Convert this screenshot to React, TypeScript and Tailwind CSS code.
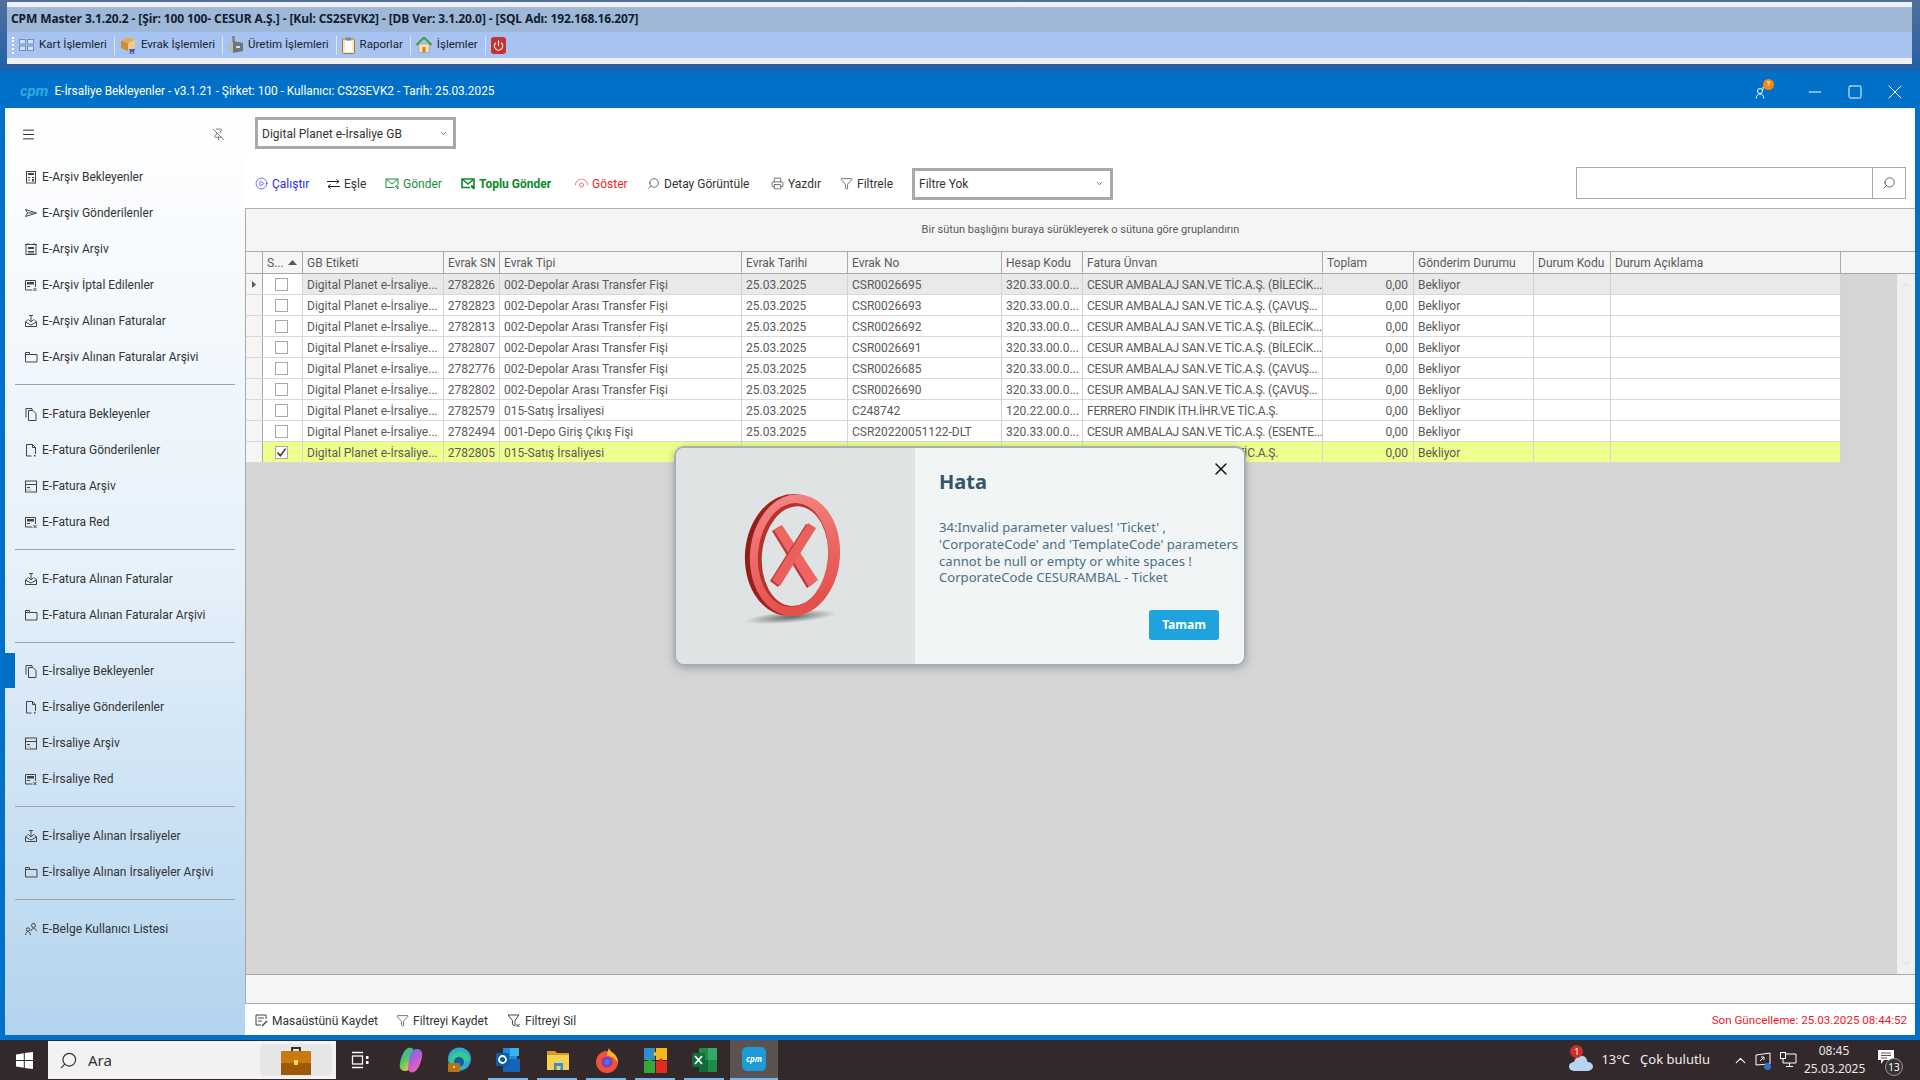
import React from 'react';
import {
    ChevronDown,
    ChevronUp,
    Filter,
    Menu,
    Minus,
    PinOff,
    PlayCircle,
    Power,
    Printer,
    Search,
    Square,
    X,
} from 'lucide-react';

type IconKind = 'calc' | 'send' | 'news' | 'red' | 'inbox' | 'folder' | 'copy' | 'file' | 'archive' | 'users';

// thin 14px glyphs used by the side menu
const SideIcon = ({ kind }: { kind: IconKind }) => (
    <svg width="14" height="14" viewBox="0 0 14 14" fill="none" stroke="#444" strokeWidth="1" className="shrink-0">
        {kind === 'calc' && (
            <>
                <rect x="2.5" y="1.5" width="9" height="11.5" />
                <rect x="4" y="3" width="6" height="2" fill="#444" stroke="none" />
                <path d="M4 7.5h2M8 7.5h2M4 10h2" />
                <rect x="8" y="9" width="2" height="2.5" fill="#444" stroke="none" />
            </>
        )}
        {kind === 'send' && <path d="M1.5 3.5 L12.5 7 L1.5 10.5 L3.5 7 Z M3.5 7 H9" />}
        {kind === 'news' && (
            <>
                <rect x="2" y="2.5" width="10" height="10" />
                <path d="M1 2.5h12M4 1v2M10 1v2" />
                <rect x="4" y="5" width="6" height="2" fill="#444" stroke="none" />
                <path d="M4 9.5h6M4 11h6" />
            </>
        )}
        {kind === 'red' && (
            <>
                <path d="M11.5 9V2.5H1.5v9.5h7" />
                <rect x="3" y="4" width="7" height="2.5" fill="#444" stroke="none" />
                <path d="M3 8.5h3M9.5 10l3 3M12.5 10l-3 3" />
            </>
        )}
        {kind === 'inbox' && (
            <>
                <path d="M1.5 8 L4 5.5M12.5 8 L10 5.5M1.5 8v4.5h11V8M1.5 8 L7 11 L12.5 8" />
                <path d="M7 1.5V8M4.5 5.5 L7 8 L9.5 5.5M5 1.5h4" />
            </>
        )}
        {kind === 'folder' && <path d="M1.5 2.5h4v2h7.5v7.5H1.5z M1.5 4.5h4" />}
        {kind === 'copy' && (
            <>
                <path d="M2 10.5V1.5h6v1.5" />
                <path d="M4.5 3.5h4.5l3 3v7h-7.5z" />
            </>
        )}
        {kind === 'file' && (
            <>
                <path d="M2.5 13V1.5h6l3 3V11" />
                <path d="M8.5 1.5v3h3M2.5 13h5" />
                <rect x="10" y="12" width="1.5" height="1.5" fill="#444" stroke="none" />
            </>
        )}
        {kind === 'archive' && (
            <>
                <rect x="1.5" y="2" width="11" height="11" />
                <path d="M1.5 5.5h11M3 8.5h3M1.5 11h5" />
                <rect x="2" y="9.5" width="4" height="3" fill="#cfcfcf" stroke="none" />
            </>
        )}
        {kind === 'users' && (
            <>
                <circle cx="9.5" cy="3.5" r="2" />
                <path d="M7 9c.5-2 1.5-2.5 2.5-2.5S12 7 12.5 9" />
                <circle cx="4" cy="7.5" r="1.7" />
                <path d="M1.5 13c.5-2.5 1.5-3.5 2.5-3.5S6 10.500 6.5 13" />
            </>
        )}
    </svg>
);

const sideGroups: { label: string; icon: IconKind; active?: boolean }[][] = [
    [
        { label: 'E-Arşiv Bekleyenler', icon: 'calc' },
        { label: 'E-Arşiv Gönderilenler', icon: 'send' },
        { label: 'E-Arşiv Arşiv', icon: 'news' },
        { label: 'E-Arşiv İptal Edilenler', icon: 'red' },
        { label: 'E-Arşiv Alınan Faturalar', icon: 'inbox' },
        { label: 'E-Arşiv Alınan Faturalar Arşivi', icon: 'folder' },
    ],
    [
        { label: 'E-Fatura Bekleyenler', icon: 'copy' },
        { label: 'E-Fatura Gönderilenler', icon: 'file' },
        { label: 'E-Fatura Arşiv', icon: 'archive' },
        { label: 'E-Fatura Red', icon: 'red' },
    ],
    [
        { label: 'E-Fatura Alınan Faturalar', icon: 'inbox' },
        { label: 'E-Fatura Alınan Faturalar Arşivi', icon: 'folder' },
    ],
    [
        { label: 'E-İrsaliye Bekleyenler', icon: 'copy', active: true },
        { label: 'E-İrsaliye Gönderilenler', icon: 'file' },
        { label: 'E-İrsaliye Arşiv', icon: 'archive' },
        { label: 'E-İrsaliye Red', icon: 'red' },
    ],
    [
        { label: 'E-İrsaliye Alınan İrsaliyeler', icon: 'inbox' },
        { label: 'E-İrsaliye Alınan İrsaliyeler Arşivi', icon: 'folder' },
    ],
    [{ label: 'E-Belge Kullanıcı Listesi', icon: 'users' }],
];

const columns = [
    { label: 'GB Etiketi', width: 'w-[141px]' },
    { label: 'Evrak SN', width: 'w-[56px]' },
    { label: 'Evrak Tipi', width: 'w-[242px]' },
    { label: 'Evrak Tarihi', width: 'w-[106px]' },
    { label: 'Evrak No', width: 'w-[154px]' },
    { label: 'Hesap Kodu', width: 'w-[81px]' },
    { label: 'Fatura Ünvan', width: 'w-[240px]' },
    { label: 'Toplam', width: 'w-[91px]' },
    { label: 'Gönderim Durumu', width: 'w-[120px]' },
    { label: 'Durum Kodu', width: 'w-[77px]' },
    { label: 'Durum Açıklama', width: 'w-[230px]' },
];

const gb = 'Digital Planet e-İrsaliye...';
const depo = '002-Depolar Arası Transfer Fişi';
const bil = 'CESUR AMBALAJ SAN.VE TİC.A.Ş. (BİLECİK...';
const cav = 'CESUR AMBALAJ SAN.VE TİC.A.Ş. (ÇAVUŞ...';
const fer = 'FERRERO FINDIK İTH.İHR.VE TİC.A.Ş.';

const rows = [
    ['2782826', depo, 'CSR0026695', '320.33.00.0...', bil],
    ['2782823', depo, 'CSR0026693', '320.33.00.0...', cav],
    ['2782813', depo, 'CSR0026692', '320.33.00.0...', bil],
    ['2782807', depo, 'CSR0026691', '320.33.00.0...', bil],
    ['2782776', depo, 'CSR0026685', '320.33.00.0...', cav],
    ['2782802', depo, 'CSR0026690', '320.33.00.0...', cav],
    ['2782579', '015-Satış İrsaliyesi', 'C248742', '120.22.00.0...', fer],
    ['2782494', '001-Depo Giriş Çıkış Fişi', 'CSR20220051122-DLT', '320.33.00.0...', 'CESUR AMBALAJ SAN.VE TİC.A.Ş. (ESENTE...'],
    ['2782805', '015-Satış İrsaliyesi', '', '', fer],
];

const TopMenu = () => {
    const items = [
        {
            label: 'Kart İşlemleri',
            icon: (
                <svg width="15" height="12" viewBox="0 0 15 12" fill="#cfe0f7" stroke="#6b8fc4">
                    <rect x="0.5" y="0.5" width="6" height="4.5" />
                    <rect x="8.5" y="0.5" width="6" height="4.5" />
                    <rect x="0.5" y="7" width="6" height="4.5" />
                    <rect x="8.5" y="7" width="6" height="4.5" />
                </svg>
            ),
        },
        {
            label: 'Evrak İşlemleri',
            icon: (
                <svg width="16" height="18" viewBox="0 0 16 18">
                    <path d="M1 5 L8 1 L15 4 V12 L8 15 L1 12 Z" fill="#e3ad58" />
                    <path d="M8 7 L15 4 V12 L8 15 Z" fill="#f1cc88" />
                    <path d="M1 5 L8 7 V15 L1 12 Z" fill="#c98f3c" />
                    <path d="M9 13h6l-1 3h-4z" fill="#3f63b8" />
                    <circle cx="10.5" cy="17" r="1" fill="#3f63b8" />
                    <circle cx="13.5" cy="17" r="1" fill="#3f63b8" />
                </svg>
            ),
        },
        {
            label: 'Üretim İşlemleri',
            icon: (
                <svg width="15" height="18" viewBox="0 0 15 18">
                    <rect x="4" y="0" width="3" height="6" fill="#8a8a8a" />
                    <path d="M5 5 L15 7 V15 L5 17 Z" fill="#6f7478" />
                    <path d="M0 8 L5 6 V17 L0 15 Z" fill="#b9bdc0" />
                    <rect x="8" y="10" width="4" height="2" fill="#d8dadc" />
                </svg>
            ),
        },
        {
            label: 'Raporlar',
            icon: (
                <svg width="13" height="17" viewBox="0 0 13 17">
                    <rect x="0.5" y="2" width="12" height="14.5" rx="1" fill="#f5e8c4" stroke="#a5762a" />
                    <rect x="3" y="4" width="7" height="11" fill="#fff" />
                    <rect x="4" y="0.5" width="5" height="3" fill="#7d8794" />
                </svg>
            ),
        },
        {
            label: 'İşlemler',
            icon: (
                <svg width="16" height="16" viewBox="0 0 16 16">
                    <rect x="3" y="7" width="10" height="8.5" fill="#f6e4b8" stroke="#a9874a" strokeWidth="0.5" />
                    <path d="M0.5 8 L8 0.5 L15.5 8" fill="none" stroke="#3f9a3a" strokeWidth="2" />
                    <rect x="6.5" y="10" width="3" height="5.5" fill="#c5842c" />
                </svg>
            ),
        },
    ];
    return (
        <div className="h-[26px] bg-[#a6c3f1] flex items-center pl-[5px] text-[11.5px] text-[#1b2430]">
            <div className="w-[2px] h-[17px] border-l-2 border-dotted border-white mr-[5px]" />
            {items.map((item) => (
                <div key={item.label} className="flex items-center">
                    {item.icon}
                    <span className="ml-[5px] mr-[7px] whitespace-nowrap">{item.label}</span>
                    <div className="w-px h-[19px] bg-[#dbe6f8] mr-[5px]" />
                </div>
            ))}
            <div className="w-[15px] h-[17px] rounded-[3px] bg-[#c9322b] flex items-center justify-center">
                <Power size={11} strokeWidth={2.5} className="text-white" />
            </div>
        </div>
    );
};

const Sidebar = () => (
    <aside className="w-[240px] shrink-0 bg-gradient-to-b from-white via-[#e6f1fa] to-[#b3d3ee] text-[#333] text-[12px]">
        <div className="h-[51px] flex items-center justify-between pl-[16px] pr-[20px] pt-[2px]">
            <Menu size={15} strokeWidth={1.5} className="text-[#222]" />
            <PinOff size={13} strokeWidth={1.25} className="text-[#444]" />
        </div>
        {sideGroups.map((group, i) => (
            <div key={i}>
                {group.map((item) => (
                    <div key={item.label} className="h-9 flex items-center relative pl-[19px]">
                        {item.active && <div className="absolute left-0 top-0 w-[10px] h-[35px] bg-[#0170c9]" />}
                        <SideIcon kind={item.icon} />
                        <span className="ml-[4px] whitespace-nowrap">{item.label}</span>
                    </div>
                ))}
                {i < sideGroups.length - 1 && (
                    <div className={i === 2 ? 'h-5 pt-[9px] pl-[10px] pr-[10px]' : 'h-[21px] pt-[9px] pl-[10px] pr-[10px]'}>
                        <div className="h-px bg-[#a3a3a3]" />
                    </div>
                )}
            </div>
        ))}
    </aside>
);

const ToolItem = ({ icon, label, className }: { icon: React.ReactNode; label: string; className?: string }) => (
    <div className={`flex items-center gap-[4px] whitespace-nowrap ${className ?? ''}`}>
        {icon}
        <span>{label}</span>
    </div>
);

const MailIcon = ({ bold }: { bold?: boolean }) => (
    <svg width="14" height="12" viewBox="0 0 14 12" fill="none" stroke="currentColor" strokeWidth={bold ? 1.6 : 1}>
        <path d="M9 9.5H1V1h12v6" />
        <path d="M1 1 L7 6 L13 1" />
        <path d="M10 8h3v3M13 11 L10.5 8.5" />
    </svg>
);

const FunnelX = () => (
    <svg width="14" height="14" viewBox="0 0 14 14" fill="none" stroke="#444">
        <path d="M1 1h11 L8 6.5V12 L5.5 10.5V6.5z" />
        <path d="M9.5 10l3 3M12.5 10l-3 3" />
    </svg>
);

const Toolbar = () => (
    <div className="h-[48px] pt-[7px] pl-[10px] pr-[9px] flex items-start">
        <div className="h-8 flex items-center text-[12px] text-[#333] pt-px">
            <ToolItem className="w-[72px] text-[#2b2bf0]" label="Çalıştır" icon={<PlayCircle size={13} strokeWidth={1.25} />} />
            <ToolItem
                className="w-[58px]"
                label="Eşle"
                icon={
                    <svg width="13" height="10" viewBox="0 0 13 10" fill="none" stroke="#222">
                        <path d="M0 2.5h12M9.5 0.5 L12 2.5 L9.5 4.5M13 7.5H1M3.5 5.5 L1 7.5 L3.5 9.5" />
                    </svg>
                }
            />
            <ToolItem className="w-[76px] text-[#1b8f35]" label="Gönder" icon={<MailIcon />} />
            <ToolItem className="w-[114px] text-[#0c8a2a] font-bold" label="Toplu Gönder" icon={<MailIcon bold />} />
            <ToolItem
                className="w-[72px] text-[#f01f2a]"
                label="Göster"
                icon={
                    <svg width="13" height="9" viewBox="0 0 13 9" fill="none" stroke="#ef6b6b">
                        <path d="M0.5 6 A6 6 0 0 1 12.5 6" />
                        <circle cx="6.5" cy="6" r="2" />
                    </svg>
                }
            />
            <ToolItem className="w-[124px]" label="Detay Görüntüle" icon={<Search size={13} strokeWidth={1.25} className="-scale-x-100" />} />
            <ToolItem className="w-[69px]" label="Yazdır" icon={<Printer size={13} strokeWidth={1.25} />} />
            <ToolItem className="w-[72px]" label="Filtrele" icon={<Filter size={13} strokeWidth={1.25} />} />
            <div className="w-[201px] h-8 border-[3px] border-[#a9a9a9] flex items-center justify-between pl-[4px] pr-[6px]">
                <span>Filtre Yok</span>
                <ChevronDown size={9} strokeWidth={1.75} />
            </div>
        </div>
        <div className="ml-auto w-[330px] h-8 border border-[#a9a9a9] flex justify-end">
            <div className="w-[33px] border-l border-[#a9a9a9] flex items-center justify-center">
                <Search size={14} strokeWidth={1.25} className="-scale-x-100 text-[#333]" />
            </div>
        </div>
    </div>
);

const Checkbox = ({ checked }: { checked?: boolean }) => (
    <div className="w-[13px] h-[13px] bg-white border border-[#a8a8a8] flex items-center justify-center">
        {checked && (
            <svg width="11" height="11" viewBox="0 0 11 11" fill="none">
                <path d="M1.5 5.5 L4.3 8.8 L9.6 1.6" stroke="#333" strokeWidth="1.5" />
            </svg>
        )}
    </div>
);

const Grid = () => (
    <div className="flex-1 flex flex-col border-l border-[#a9a9a9] text-[12px] text-[#5a5a5a] bg-[#d5d5d5] min-h-0">
        <div className="h-[43px] shrink-0 bg-[#f5f5f5] border-t border-[#b0b0b0] flex items-center justify-center text-[11px] text-[#5a5a5a] pt-[1px]">
            Bir sütun başlığını buraya sürükleyerek o sütuna göre gruplandırın
        </div>
        <div className="h-[23px] shrink-0 bg-[#f5f5f5] border-y border-[#aaaaaa] flex">
            <div className="w-[17px] border-r border-[#aaaaaa]" />
            <div className="w-10 border-r border-[#aaaaaa] pl-[4px] flex items-center justify-between pr-[5px]">
                <span>S...</span>
                <svg width="9" height="5" viewBox="0 0 9 5"><path d="M0 5 L4.5 0 L9 5 Z" fill="#555" /></svg>
            </div>
            {columns.map((c) => (
                <div key={c.label} className={`${c.width} border-r border-[#aaaaaa] pl-[4px] flex items-center whitespace-nowrap overflow-hidden`}>
                    {c.label}
                </div>
            ))}
        </div>
        <div className="flex-1 flex min-h-0">
            <div className="w-[1595px] shrink-0">
                {rows.map((r, i) => {
                    const bg = i === 0 ? 'bg-[#e9e9e9]' : i === 8 ? 'bg-[#efff8e]' : 'bg-white';
                    const line = 'border-r border-[#d4d4d4] pt-px flex items-center whitespace-nowrap overflow-hidden';
                    return (
                        <div key={r[0]} className={`h-[21px] flex border-b border-[#d8d8d8] ${bg}`}>
                            <div className="w-[17px] bg-[#f5f5f5] border-r border-[#aaaaaa] flex items-center justify-center">
                                {i === 0 && (
                                    <svg width="4" height="7" viewBox="0 0 4 7"><path d="M0 0 L4 3.5 L0 7 Z" fill="#555" /></svg>
                                )}
                            </div>
                            <div className={`w-10 pr-[2px] ${line} justify-center ${i === 8 ? 'bg-[#efff8e]' : 'bg-white'}`}>
                                <Checkbox checked={i === 8} />
                            </div>
                            <div className={`w-[141px] pl-[4px] ${line}`}>{gb}</div>
                            <div className={`w-[56px] pr-[4px] justify-end ${line}`}>{r[0]}</div>
                            <div className={`w-[242px] pl-[4px] ${line}`}>{r[1]}</div>
                            <div className={`w-[106px] pl-[4px] ${line}`}>25.03.2025</div>
                            <div className={`w-[154px] pl-[4px] ${line}`}>{r[2]}</div>
                            <div className={`w-[81px] pl-[4px] ${line}`}>{r[3]}</div>
                            <div className={`w-[240px] pl-[4px] tracking-[-0.2px] ${line}`}>{r[4]}</div>
                            <div className={`w-[91px] pr-[5px] justify-end ${line}`}>0,00</div>
                            <div className={`w-[120px] pl-[4px] ${line}`}>Bekliyor</div>
                            <div className={`w-[77px] ${line}`} />
                            <div className={`w-[230px] ${line}`} />
                        </div>
                    );
                })}
            </div>
            <div className="flex-1" />
            <div className="w-[18px] bg-[#f0f0f0] flex flex-col items-center justify-between py-[5px] text-[#c8c8c8]">
                <ChevronUp size={12} strokeWidth={1.5} />
                <ChevronDown size={12} strokeWidth={1.5} />
            </div>
        </div>
        <div className="h-[30px] shrink-0 bg-[#f5f5f5] border-y border-[#aaaaaa]" />
    </div>
);

const StatusBar = () => (
    <div className="h-[31px] shrink-0 bg-white flex items-center pl-[10px] pr-[8px] text-[12px] text-[#333] pt-[2px]">
        <ToolItem
            className="w-[141px]"
            label="Masaüstünü Kaydet"
            icon={
                <svg width="13" height="14" viewBox="0 0 13 14" fill="none" stroke="#444">
                    <path d="M11 5V1H1v10h5M3 4h6M3 7h4" />
                    <path d="M7 12 L12 7" strokeWidth="1.5" />
                </svg>
            }
        />
        <ToolItem className="w-[111px]" label="Filtreyi Kaydet" icon={<Filter size={13} strokeWidth={1.25} />} />
        <ToolItem label="Filtreyi Sil" icon={<FunnelX />} />
        <span className="ml-auto text-[11.6px] text-[#f01828]">Son Güncelleme: 25.03.2025 08:44:52</span>
    </div>
);

const ErrorMark = () => (
    <svg width="120" height="150" viewBox="0 0 120 150">
        <defs>
            <linearGradient id="ringFront" x1="0" y1="0" x2="0.3" y2="1">
                <stop offset="0" stopColor="#f58a8a" />
                <stop offset="0.55" stopColor="#ec6a66" />
                <stop offset="1" stopColor="#e4504c" />
            </linearGradient>
            <linearGradient id="ringBack" x1="0" y1="0" x2="1" y2="0">
                <stop offset="0" stopColor="#8f1d16" />
                <stop offset="1" stopColor="#c23a33" />
            </linearGradient>
            <radialGradient id="markShadow">
                <stop offset="0" stopColor="#000" stopOpacity="0.55" />
                <stop offset="1" stopColor="#000" stopOpacity="0" />
            </radialGradient>
        </defs>
        <ellipse cx="58" cy="132" rx="46" ry="6" fill="url(#markShadow)" transform="rotate(-5 58 132)" />
        <g transform="rotate(5 60 70)">
            <ellipse cx="58" cy="70" rx="46" ry="61" fill="url(#ringBack)" />
            <ellipse cx="62" cy="70" rx="45" ry="61" fill="url(#ringFront)" />
            <ellipse cx="60" cy="70" rx="35" ry="52" fill="#b8322c" />
            <ellipse cx="62" cy="71" rx="33" ry="50" fill="#e0e3e4" />
        </g>
        <g transform="translate(62 71)">
            <path d="M-21 -26 L-13 -31 L23 24 L14 31 Z" fill="#b63a36" transform="translate(-2 1)" />
            <path d="M-21 -26 L-13 -31 L23 24 L14 31 Z" fill="#ee6562" />
            <path d="M21 -28 L13 -33 L-23 24 L-15 30 Z" fill="#b63a36" transform="translate(-2 1)" />
            <path d="M21 -28 L13 -33 L-23 24 L-15 30 Z" fill="#e9605c" />
        </g>
    </svg>
);

const ErrorDialog = () => (
    <div className="absolute left-[674px] top-[446px] w-[572px] h-[220px] rounded-[10px] border-2 border-[#a3b0b8] shadow-[0_2px_8px_rgba(0,0,0,0.25)] overflow-hidden flex font-['Noto_Sans',sans-serif]">
        <div className="w-[239px] bg-[#e0e3e4] flex items-center justify-center pr-[6px] pt-[8px]">
            <ErrorMark />
        </div>
        <div className="flex-1 bg-[#f1f5f6] pl-[24px] pt-[20px] flex flex-col relative">
            <button className="absolute top-[11px] right-[13px] text-[#111]">
                <X size={20} strokeWidth={1.75} />
            </button>
            <h2 className="text-[20px] leading-[27px] font-bold text-[#33566b]">Hata</h2>
            <p className="mt-[24px] text-[13.1px] leading-[16.8px] whitespace-nowrap text-[#4c7084]">
                34:Invalid parameter values! 'Ticket' ,<br />
                'CorporateCode' and 'TemplateCode' parameters<br />
                cannot be null or empty or white spaces !<br />
                CorporateCode CESURAMBAL - Ticket
            </p>
            <div className="mt-auto mb-[24px] mr-[25px] self-end w-[70px] h-[30px] rounded-[3px] bg-[#1fa3dc] text-white text-[12px] font-bold flex items-center justify-center">
                Tamam
            </div>
        </div>
    </div>
);

const TaskSlot = ({ children, active }: { children: React.ReactNode; active?: boolean }) => (
    <div className="w-[49px] h-full flex items-center justify-center relative">
        {children}
        {active && <div className="absolute bottom-0 left-[4px] w-10 h-[2px] bg-[#76b9ed]" />}
    </div>
);

const TaskIcons = () => (
    <div className="flex items-center h-full ml-[12px]">
        <div className="w-6 flex justify-center mr-[14px]">
            <svg width="18" height="18" viewBox="0 0 18 18" fill="none" stroke="#fff" strokeWidth="1.3">
                <path d="M1 1.5h11M1 16.5h11" />
                <rect x="1.5" y="5" width="10" height="8" />
                <rect x="15" y="5" width="2.5" height="3" fill="#fff" stroke="none" />
                <rect x="15" y="10" width="2.5" height="3" fill="#fff" stroke="none" />
            </svg>
        </div>
        <TaskSlot>
            <svg width="24" height="26" viewBox="0 0 24 26">
                <defs>
                    <linearGradient id="copA" x1="0" y1="0" x2="0.6" y2="1">
                        <stop offset="0" stopColor="#3aa8e8" />
                        <stop offset="0.5" stopColor="#48c46a" />
                        <stop offset="1" stopColor="#f2c53d" />
                    </linearGradient>
                    <linearGradient id="copB" x1="0" y1="0" x2="0.6" y2="1">
                        <stop offset="0" stopColor="#4f7be8" />
                        <stop offset="0.6" stopColor="#c45ad8" />
                        <stop offset="1" stopColor="#f26aa0" />
                    </linearGradient>
                </defs>
                <path d="M9 1 C12 0 14 1 15 4 L14 14 C13 21 10 24 6 24 C2 24 0 21 1 16 C2 10 5 3 9 1 Z" fill="url(#copA)" />
                <path d="M15 25 C12 26 10 25 9 22 L10 12 C11 5 14 2 18 2 C22 2 24 5 23 10 C22 16 19 23 15 25 Z" fill="url(#copB)" />
            </svg>
        </TaskSlot>
        <TaskSlot>
            <svg width="25" height="26" viewBox="0 0 25 26">
                <circle cx="12.5" cy="12" r="11.5" fill="#2fa8d8" />
                <path d="M2 14 C 3 6 12 2 19 6 C 23 9 23 14 20 15 H9 C 9 18 13 20 18 19 C 13 25 3 23 2 14z" fill="#37c98e" />
                <circle cx="12" cy="15" r="5" fill="#0f5ea8" />
                <rect x="1" y="16" width="12" height="9" rx="1" fill="#b8711c" />
                <rect x="6" y="19" width="2" height="2" fill="#f5d25c" />
            </svg>
        </TaskSlot>
        <TaskSlot active>
            <svg width="25" height="26" viewBox="0 0 25 26">
                <rect x="7" y="1" width="14" height="20" fill="#1f8be0" />
                <rect x="14" y="1" width="9" height="8" fill="#39b3ec" />
                <path d="M7 12 L24 12 V25 H7z" fill="#1466b5" />
                <rect x="0" y="6" width="13" height="13" rx="1" fill="#0f5ca8" />
                <circle cx="6.5" cy="12.5" r="3.5" fill="none" stroke="#fff" strokeWidth="1.8" />
            </svg>
        </TaskSlot>
        <TaskSlot active>
            <svg width="24" height="22" viewBox="0 0 24 22">
                <path d="M1 2h8l2 2h12v5H1z" fill="#d99a22" />
                <rect x="1" y="6" width="22" height="15" fill="#f6cf55" />
                <rect x="8" y="14" width="9" height="7" fill="#2f8fd8" />
                <rect x="10.5" y="17" width="4" height="4" fill="#f6cf55" />
            </svg>
        </TaskSlot>
        <TaskSlot active>
            <svg width="24" height="26" viewBox="0 0 24 26">
                <circle cx="12" cy="15" r="11" fill="#f2503b" />
                <path d="M14 1c1 5 9 6 9 15-3-6-8-7-11-7 0-3 1-6 2-8z" fill="#fbb22c" />
                <circle cx="12" cy="15" r="5.5" fill="#7a3fc8" />
                <circle cx="12" cy="15" r="2.5" fill="#4a7be8" />
            </svg>
        </TaskSlot>
        <TaskSlot active>
            <svg width="23" height="25" viewBox="0 0 23 25">
                <rect x="0" y="0" width="11" height="12" fill="#2b8fd0" />
                <rect x="12" y="0" width="11" height="12" fill="#f5b81c" />
                <rect x="0" y="13" width="11" height="12" fill="#36a83a" />
                <rect x="12" y="13" width="11" height="12" fill="#e02b20" />
                <circle cx="11.5" cy="6" r="2" fill="#f5b81c" />
                <circle cx="6" cy="12.5" r="2" fill="#36a83a" />
                <circle cx="17" cy="12.5" r="2" fill="#e02b20" />
            </svg>
        </TaskSlot>
        <TaskSlot active>
            <svg width="25" height="26" viewBox="0 0 25 26">
                <rect x="7" y="1" width="18" height="24" rx="1" fill="#1f8a4c" />
                <rect x="16" y="1" width="9" height="12" fill="#33a867" />
                <rect x="7" y="13" width="9" height="12" fill="#146b3a" />
                <rect x="0" y="6" width="13" height="14" rx="1" fill="#0f6b38" />
                <path d="M3 9 L10 17 M10 9 L3 17" stroke="#fff" strokeWidth="1.8" />
            </svg>
        </TaskSlot>
        <div className="w-[48px] h-full bg-[#5a5351] border-b-2 border-[#76b9ed] flex items-center justify-center ml-[1px]">
            <div className="w-6 h-6 rounded-[5px] bg-[#1e9ad6] flex items-center justify-center text-[8px] italic font-bold text-white">
                cpm
            </div>
        </div>
    </div>
);

const Taskbar = () => (
    <div className="h-10 shrink-0 bg-[#33292a] flex items-center text-white font-['Noto_Sans',sans-serif]">
        <div className="w-12 flex justify-center">
            <svg width="17" height="17" viewBox="0 0 17 17" fill="#fff">
                <path d="M0 2.5 L7.8 1.2 V8 H0z M8.8 1 L17 0 V8 H8.8z M0 9 H7.8 V15.8 L0 14.5z M8.8 9 H17 V17 L8.8 15.9z" />
            </svg>
        </div>
        <div className="w-[288px] h-[38px] bg-[#f2f2f2] flex items-center pl-[11px] pr-[4px] text-[#333] text-[15px]">
            <Search size={19} strokeWidth={1.5} className="-scale-x-100" />
            <span className="ml-[10px]">Ara</span>
            <div className="ml-auto w-[72px] h-8 rounded-[5px] bg-[#e6e6e6] flex items-center justify-center">
                <svg width="30" height="30" viewBox="0 0 30 30">
                    <path d="M11 6V3h8v3" fill="none" stroke="#333" strokeWidth="2" />
                    <rect x="0" y="6" width="30" height="24" rx="1" fill="#c77a10" />
                    <rect x="0" y="18" width="30" height="12" fill="#9c5a08" />
                    <rect x="13" y="15" width="4" height="5" fill="#f5d25c" />
                </svg>
            </div>
        </div>
        <TaskIcons />
        <div className="ml-auto flex items-center h-full">
            <div className="relative w-6 h-6 mr-[8px]">
                <svg width="24" height="20" viewBox="0 0 24 20" className="absolute top-[4px]">
                    <path d="M6 19c-3 0-6-1.5-6-4.5S3 10 5 10c1-4 5-7 9-6 3 .7 4 3 4.5 6 3 0 5.5 2 5.5 4.5S21 19 18 19z" fill="#b8d4f2" />
                </svg>
                <div className="absolute left-[1px] -top-[3px] w-[13px] h-[13px] rounded-full bg-[#c8302a] text-[9px] flex items-center justify-center">
                    1
                </div>
            </div>
            <span className="text-[13px] mr-[10px] text-[#eee]">13°C</span>
            <span className="text-[13px] text-[#eee] mr-[22px]">Çok bulutlu</span>
            <ChevronUp size={17} strokeWidth={1.5} className="mr-[6px]" />
            <div className="relative mr-[9px]">
                <svg width="16" height="16" viewBox="0 0 16 16" fill="none" stroke="#fff">
                    <path d="M1 3 L15 1V12 L1 13z" />
                    <path d="M5 9 L9 5M6 5h3v3" />
                </svg>
                <div className="absolute right-0 -bottom-[2px] w-[7px] h-[7px] rounded-full bg-[#2e74c9]" />
            </div>
            <svg width="17" height="16" viewBox="0 0 17 16" fill="none" stroke="#fff" className="mr-[7px]">
                <path d="M5 2h11v9H3V7M9.5 11v3M6 14.5h7" />
                <rect x="0.5" y="0.5" width="5" height="6" />
            </svg>
            <div className="w-[60px] text-center text-[12px] leading-[18px] text-[#e8e8e8]">
                <div>08:45</div>
                <div>25.03.2025</div>
            </div>
            <div className="relative w-14 h-full flex items-center justify-center pr-[10px]">
                <svg width="18" height="15" viewBox="0 0 18 15" fill="#fff" className="-mt-[6px]">
                    <path d="M0 0h16v10H6l-3 4v-4H0z" />
                    <path d="M3 3h10M3 5.5h10M3 8h6" stroke="#33292a" strokeWidth="0.8" />
                </svg>
                <div className="absolute right-[17px] bottom-[4px] w-[18px] h-[18px] rounded-full bg-[#3a3232] border border-[#999] text-[10px] flex items-center justify-center">
                    13
                </div>
            </div>
        </div>
    </div>
);

export default function App() {
    return (
        <div className="relative w-[1920px] h-[1080px] overflow-hidden flex flex-col bg-[#2e5c96] font-[Roboto,sans-serif]">
            <div className="h-[71px] shrink-0 bg-gradient-to-b from-[#50709a] to-[#1f5fa8] pl-[7px] pr-[8px] pt-[2px]">
                <div className="h-[62px] bg-[#f0f0f0] pt-[5px]">
                    <div className="h-[25px] bg-[#9fb8d8] flex items-center pl-[4px] pb-[2px] text-[12px] tracking-[-0.1px] font-bold text-[#10202f] font-['Noto_Sans',sans-serif]">
                        CPM Master 3.1.20.2 - [Şir: 100 100- CESUR A.Ş.] - [Kul: CS2SEVK2] - [DB Ver: 3.1.20.0] - [SQL Adı: 192.168.16.207]
                    </div>
                    <TopMenu />
                </div>
            </div>
            <div className="flex-1 min-h-0 flex flex-col bg-[#0170c9] pl-[5px] pr-[5px] pb-[5px]">
                <div className="h-[37px] shrink-0 flex items-center pt-[4px] pl-[15px] pr-[8px] text-white text-[11.85px]">
                    <span className="italic font-bold text-[15px] text-[#2fa9e0] mr-[6px]">cpm</span>
                    <span>E-İrsaliye Bekleyenler - v3.1.21 - Şirket: 100 - Kullanıcı: CS2SEVK2 - Tarih: 25.03.2025</span>
                    <div className="ml-auto relative mr-[36px]">
                        <svg width="14" height="14" viewBox="0 0 14 14" fill="none" stroke="#fff">
                            <circle cx="5" cy="6" r="2.5" />
                            <path d="M1 13.5c.5-3 2-4.5 4-4.5s3.500 1.500 4 4.500M8 5V2h4" />
                        </svg>
                        <div className="absolute -right-[5px] -top-[6px] w-[11px] h-[11px] rounded-full bg-[#f08a10] text-[8px] flex items-center justify-center">?</div>
                    </div>
                    <Minus size={20} strokeWidth={1.2} className="mr-[22px]" />
                    <Square size={16} strokeWidth={1.5} className="mr-[20px]" />
                    <X size={24} strokeWidth={1} />
                </div>
                <div className="flex-1 min-h-0 flex bg-white">
                    <Sidebar />
                    <main className="flex-1 min-w-0 flex flex-col">
                        <div className="h-[52px] shrink-0 pl-[10px] pt-[9px]">
                            <div className="w-[201px] h-8 border-[3px] border-[#a9a9a9] flex items-center justify-between pl-[4px] pr-[5px] pt-px text-[12px] text-[#333]">
                                <span>Digital Planet e-İrsaliye GB</span>
                                <ChevronDown size={9} strokeWidth={1.75} />
                            </div>
                        </div>
                        <Toolbar />
                        <Grid />
                        <StatusBar />
                    </main>
                </div>
            </div>
            <Taskbar />
            <ErrorDialog />
        </div>
    );
}
